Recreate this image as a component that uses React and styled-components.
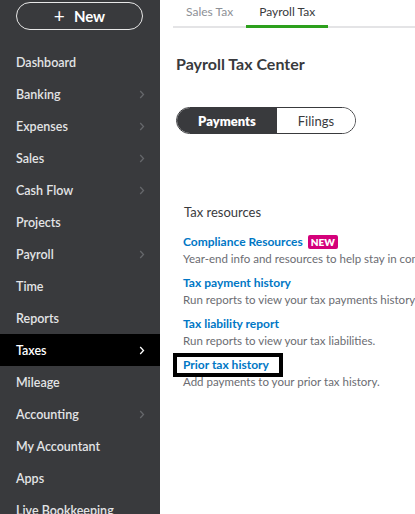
import React from "react";
import styled, { createGlobalStyle } from "styled-components";

const Global = createGlobalStyle`
  html, body { margin: 0; padding: 0; background: #fff; }
  body { font-family: Lato, "Open Sans", Arial, sans-serif; -webkit-font-smoothing: antialiased; }
  * { box-sizing: border-box; }
`;

const Page = styled.div`
  display: flex;
  width: 415px;
  height: 514px;
  overflow: hidden;
`;

const Sidebar = styled.nav`
  width: 160px;
  flex: none;
  background: #393a3d;
  display: flex;
  flex-direction: column;
  padding-top: 2px;
  overflow: hidden;
`;

const NewButton = styled.button`
  flex: none;
  margin-left: 16px;
  width: 127px;
  height: 28px;
  border: 1px solid #e8e8e8;
  border-radius: 14px;
  background: transparent;
  color: #fff;
  font-family: Lato, Arial, sans-serif;
  font-size: 15px;
  font-weight: 700;
  display: flex;
  align-items: center;
  justify-content: center;
  gap: 9px;
  padding: 0;
`;

const Plus = styled.span`
  font-size: 19px;
  font-weight: 400;
  line-height: 1;
  margin-top: -2px;
`;

const NavList = styled.ul`
  flex: none;
  list-style: none;
  margin: 16px 0 0;
  padding: 0;
`;

const NavItem = styled.li`
  height: 32px;
  display: flex;
  align-items: center;
  justify-content: space-between;
  padding: 0 15px 0 16px;
  background: ${(p) => (p.$active ? "#000" : "transparent")};
  color: ${(p) => (p.$active ? "#fff" : "#e3e4e6")};
  font-size: 12.5px;
  font-weight: 600;
  white-space: nowrap;
`;

const Chevron = ({ active }) => (
  <svg width="6" height="9" viewBox="0 0 6 9">
    <path
      d="M1.2 1 L4.5 4.5 L1.2 8"
      fill="none"
      stroke={active ? "#fff" : "#65676b"}
      strokeWidth="1.3"
    />
  </svg>
);

const Main = styled.main`
  flex: 1;
  min-width: 0;
  overflow: hidden;
  display: flex;
  flex-direction: column;
`;

const Tabs = styled.div`
  flex: none;
  display: flex;
  margin-left: 13px;
  border-bottom: 2px solid #e4e4e6;
  height: 28px;
`;

const Tab = styled.div`
  padding: 0 13px 2px;
  display: flex;
  align-items: center;
  height: 28px;
  margin-bottom: -2px;
  font-size: 12px;
  color: ${(p) => (p.$active ? "#393a3d" : "#8d9096")};
  border-bottom: 3px solid ${(p) => (p.$active ? "#2ca01c" : "transparent")};
`;

const Title = styled.h1`
  flex: none;
  margin: 26px 0 0 16px;
  font-size: 16px;
  font-weight: 700;
  color: #393a3d;
  line-height: 20px;
  white-space: nowrap;
`;

const Toggle = styled.div`
  flex: none;
  display: flex;
  margin: 33px 0 0 16px;
  width: 180px;
  height: 27px;
  border: 1px solid #393a3d;
  border-radius: 14px;
  overflow: hidden;
`;

const Segment = styled.div`
  width: ${(p) => p.$w}px;
  display: flex;
  align-items: center;
  justify-content: center;
  font-size: 13px;
  font-weight: ${(p) => (p.$active ? 800 : 400)};
  background: ${(p) => (p.$active ? "#393a3d" : "#fff")};
  color: ${(p) => (p.$active ? "#fff" : "#393a3d")};
  border-radius: ${(p) => (p.$active ? "14px 0 0 14px" : "0")};
`;

const Resources = styled.section`
  flex: none;
  margin: 68px 0 0 23px;
  display: flex;
  flex-direction: column;
`;

const SectionTitle = styled.h2`
  margin: 0 0 11px 1px;
  font-size: 13px;
  font-weight: 400;
  color: #393a3d;
  line-height: 20px;
`;

const Item = styled.div`
  display: flex;
  flex-direction: column;
  margin-bottom: 6px;
  white-space: nowrap;
`;

const LinkRow = styled.div`
  display: flex;
  align-items: center;
  gap: 5px;
  height: 17px;
`;

const Link = styled.a`
  position: relative;
  color: #0077c5;
  font-size: 12px;
  font-weight: 700;
  text-decoration: none;
  line-height: 16px;
  ${(p) =>
    p.$boxed &&
    `
    &::after {
      content: "";
      position: absolute;
      left: -10px;
      right: -14px;
      top: -4px;
      bottom: -4px;
      border: 4px solid #000;
    }
  `}
`;

const Badge = styled.span`
  background: #d4007a;
  color: #fff;
  font-size: 10px;
  font-weight: 800;
  padding: 1px 3px;
  border-radius: 2px;
  line-height: 12px;
`;

const Desc = styled.div`
  font-size: 11.5px;
  color: #6b6c72;
  line-height: 18px;
`;

const navItems = [
  ["Dashboard", false],
  ["Banking", true],
  ["Expenses", true],
  ["Sales", true],
  ["Cash Flow", true],
  ["Projects", false],
  ["Payroll", true],
  ["Time", false],
  ["Reports", false],
  ["Taxes", true, true],
  ["Mileage", false],
  ["Accounting", true],
  ["My Accountant", false],
  ["Apps", false],
  ["Live Bookkeeping", false],
];

const resources = [
  { title: "Compliance Resources", badge: true, desc: "Year-end info and resources to help stay in compliance." },
  { title: "Tax payment history", desc: "Run reports to view your tax payments history." },
  { title: "Tax liability report", desc: "Run reports to view your tax liabilities." },
  { title: "Prior tax history", boxed: true, desc: "Add payments to your prior tax history." },
];

export default function App() {
  return (
    <Page>
      <Global />
      <Sidebar>
        <NewButton>
          <Plus>+</Plus>New
        </NewButton>
        <NavList>
          {navItems.map(([label, chev, active]) => (
            <NavItem key={label} $active={active}>
              <span>{label}</span>
              {chev && <Chevron active={active} />}
            </NavItem>
          ))}
        </NavList>
      </Sidebar>
      <Main>
        <Tabs>
          <Tab>Sales Tax</Tab>
          <Tab $active>Payroll Tax</Tab>
        </Tabs>
        <Title>Payroll Tax Center</Title>
        <Toggle>
          <Segment $active $w={101}>Payments</Segment>
          <Segment $w={79}>Filings</Segment>
        </Toggle>
        <Resources>
          <SectionTitle>Tax resources</SectionTitle>
          {resources.map((r) => (
            <Item key={r.title}>
              <LinkRow>
                <Link href="#" $boxed={r.boxed}>{r.title}</Link>
                {r.badge && <Badge>NEW</Badge>}
              </LinkRow>
              <Desc>{r.desc}</Desc>
            </Item>
          ))}
        </Resources>
      </Main>
    </Page>
  );
}
